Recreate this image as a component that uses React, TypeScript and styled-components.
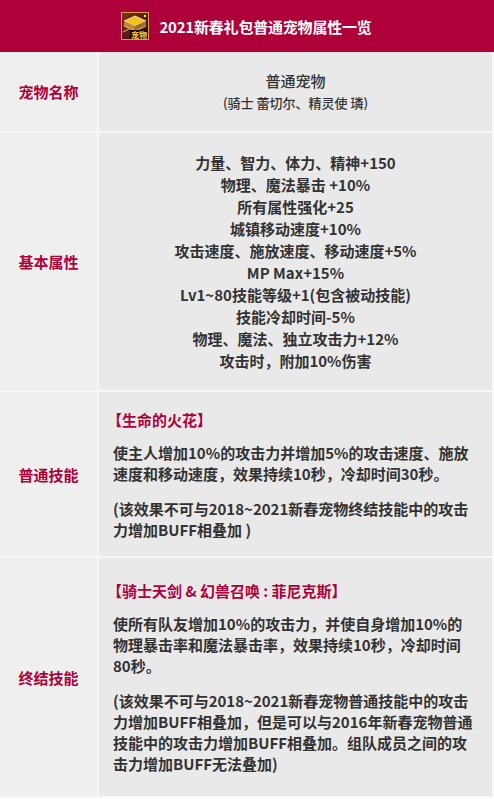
import styled, { createGlobalStyle } from "styled-components";

const GlobalStyle = createGlobalStyle`
  html, body {
    margin: 0;
    padding: 0;
    background: #ffffff;
  }
  body {
    font-family: "Noto Sans CJK SC", "Noto Sans", sans-serif;
    color: #333333;
  }
`;

const CRIMSON = "#ae0039";

const basicAttrs = [
  "力量、智力、体力、精神+150",
  "物理、魔法暴击 +10%",
  "所有属性强化+25",
  "城镇移动速度+10%",
  "攻击速度、施放速度、移动速度+5%",
  "MP Max+15%",
  "Lv1~80技能等级+1(包含被动技能)",
  "技能冷却时间-5%",
  "物理、魔法、独立攻击力+12%",
  "攻击时，附加10%伤害",
];

function PetIcon() {
  return (
    <svg width="28" height="28" viewBox="0 0 28 28">
      <defs>
        <linearGradient id="g1" x1="0" y1="0" x2="1" y2="1">
          <stop offset="0" stopColor="#8a2a18" />
          <stop offset="1" stopColor="#2a0f0a" />
        </linearGradient>
      </defs>
      <rect x="0.5" y="0.5" width="27" height="27" fill="#3a1a12" stroke="#c9a24a" strokeWidth="1" />
      <rect x="1" y="1" width="26" height="26" fill="url(#g1)" />
      <polygon points="3,9 14,4 25,9 14,14" fill="#f2c21c" stroke="#fff3c0" strokeWidth="0.8" />
      <polygon points="3,9 14,14 14,19 3,14" fill="#c08a3a" />
      <polygon points="25,9 14,14 14,19 25,14" fill="#9a6a2a" />
      <path d="M3 14 L14 19 L25 14" stroke="#f3dca0" strokeWidth="0.8" fill="none" />
      <circle cx="24" cy="4" r="1.2" fill="#ffd86a" />
      <path d="M2 20 L8 17" stroke="#ffb347" strokeWidth="1" />
      <rect x="9" y="18" width="18" height="9" fill="#1a0a06" />
      <text
        x="18"
        y="26"
        fontSize="8"
        fontWeight="700"
        fill="#ffd23a"
        textAnchor="middle"
        fontFamily="Noto Sans CJK SC, sans-serif"
      >
        宠物
      </text>
    </svg>
  );
}

export default function App() {
  return (
    <>
      <GlobalStyle />
      <Page>
        <Header>
          <PetIcon />
          <Title>2021新春礼包普通宠物属性一览</Title>
        </Header>
        <Table>
          <Row $height={79}>
            <Label>宠物名称</Label>
            <Cell $center>
              <PetName>普通宠物</PetName>
              <PetSub>(骑士 蕾切尔、精灵使 璘)</PetSub>
            </Cell>
          </Row>
          <Row $height={257}>
            <Label>基本属性</Label>
            <Cell $center>
              {basicAttrs.map((a) => (
                <AttrLine key={a}>{a}</AttrLine>
              ))}
            </Cell>
          </Row>
          <Row $height={164}>
            <Label>普通技能</Label>
            <Cell>
              <SkillName>【生命的火花】</SkillName>
              <Para>
                使主人增加10%的攻击力并增加5%的攻击速度、施放
                <br />
                速度和移动速度，效果持续10秒，冷却时间30秒。
              </Para>
              <Para>
                (该效果不可与2018~2021新春宠物终结技能中的攻击
                <br />
                力增加BUFF相叠加 )
              </Para>
            </Cell>
          </Row>
          <Row $height={238}>
            <Label>终结技能</Label>
            <Cell>
              <SkillName>【骑士天剑 &amp; 幻兽召唤 : 菲尼克斯】</SkillName>
              <Para>
                使所有队友增加10%的攻击力，并使自身增加10%的
                <br />
                物理暴击率和魔法暴击率，效果持续10秒，冷却时间
                <br />
                80秒。
              </Para>
              <Para $gap={14}>
                (该效果不可与2018~2021新春宠物普通技能中的攻击
                <br />
                力增加BUFF相叠加，但是可以与2016年新春宠物普通
                <br />
                技能中的攻击力增加BUFF相叠加。组队成员之间的攻
                <br />
                击力增加BUFF无法叠加)
              </Para>
            </Cell>
          </Row>
        </Table>
      </Page>
    </>
  );
}

const Page = styled.div`
  width: 494px;
`;

const Header = styled.div`
  height: 52px;
  background: ${CRIMSON};
  display: flex;
  align-items: center;
  justify-content: center;
  gap: 10px;
  padding-right: 1px;
  box-sizing: border-box;
`;

const Title = styled.div`
  color: #ffffff;
  font-size: 15px;
  font-weight: 700;
  letter-spacing: -0.2px;
`;

const Table = styled.div`
  display: flex;
  flex-direction: column;
  gap: 2px;
  background: #f7f7f7;
  padding-bottom: 2px;
`;

const Row = styled.div<{ $height: number }>`
  display: grid;
  grid-template-columns: 97px 1fr;
  column-gap: 2px;
  min-height: ${(p) => p.$height}px;
`;

const Label = styled.div`
  background: #efefef;
  color: ${CRIMSON};
  font-size: 15px;
  font-weight: 700;
  display: flex;
  align-items: center;
  justify-content: center;
`;

const Cell = styled.div<{ $center?: boolean }>`
  background: #e9e9e9;
  display: flex;
  flex-direction: column;
  justify-content: center;
  align-items: ${(p) => (p.$center ? "center" : "flex-start")};
  text-align: ${(p) => (p.$center ? "center" : "left")};
  padding: ${(p) => (p.$center ? "0 4px" : "0 10px 0 14px")};
  margin-right: 2px;
`;

const PetName = styled.div`
  font-size: 15px;
  font-weight: 500;
  line-height: 22px;
  color: #333333;
`;

const PetSub = styled.div`
  font-size: 13px;
  font-weight: 500;
  line-height: 22px;
  color: #333333;
`;

const AttrLine = styled.div`
  font-size: 15px;
  font-weight: 700;
  line-height: 22px;
  color: #333333;
  white-space: nowrap;
`;

const SkillName = styled.div`
  color: ${CRIMSON};
  font-size: 15px;
  font-weight: 700;
  line-height: 21px;
  margin-left: -6px;
  margin-bottom: 12px;
  white-space: nowrap;
`;

const Para = styled.div<{ $gap?: number }>`
  font-size: 15px;
  font-weight: 700;
  line-height: 21px;
  color: #333333;
  white-space: nowrap;
  & + & {
    margin-top: ${(p) => p.$gap ?? 8}px;
  }
`;
